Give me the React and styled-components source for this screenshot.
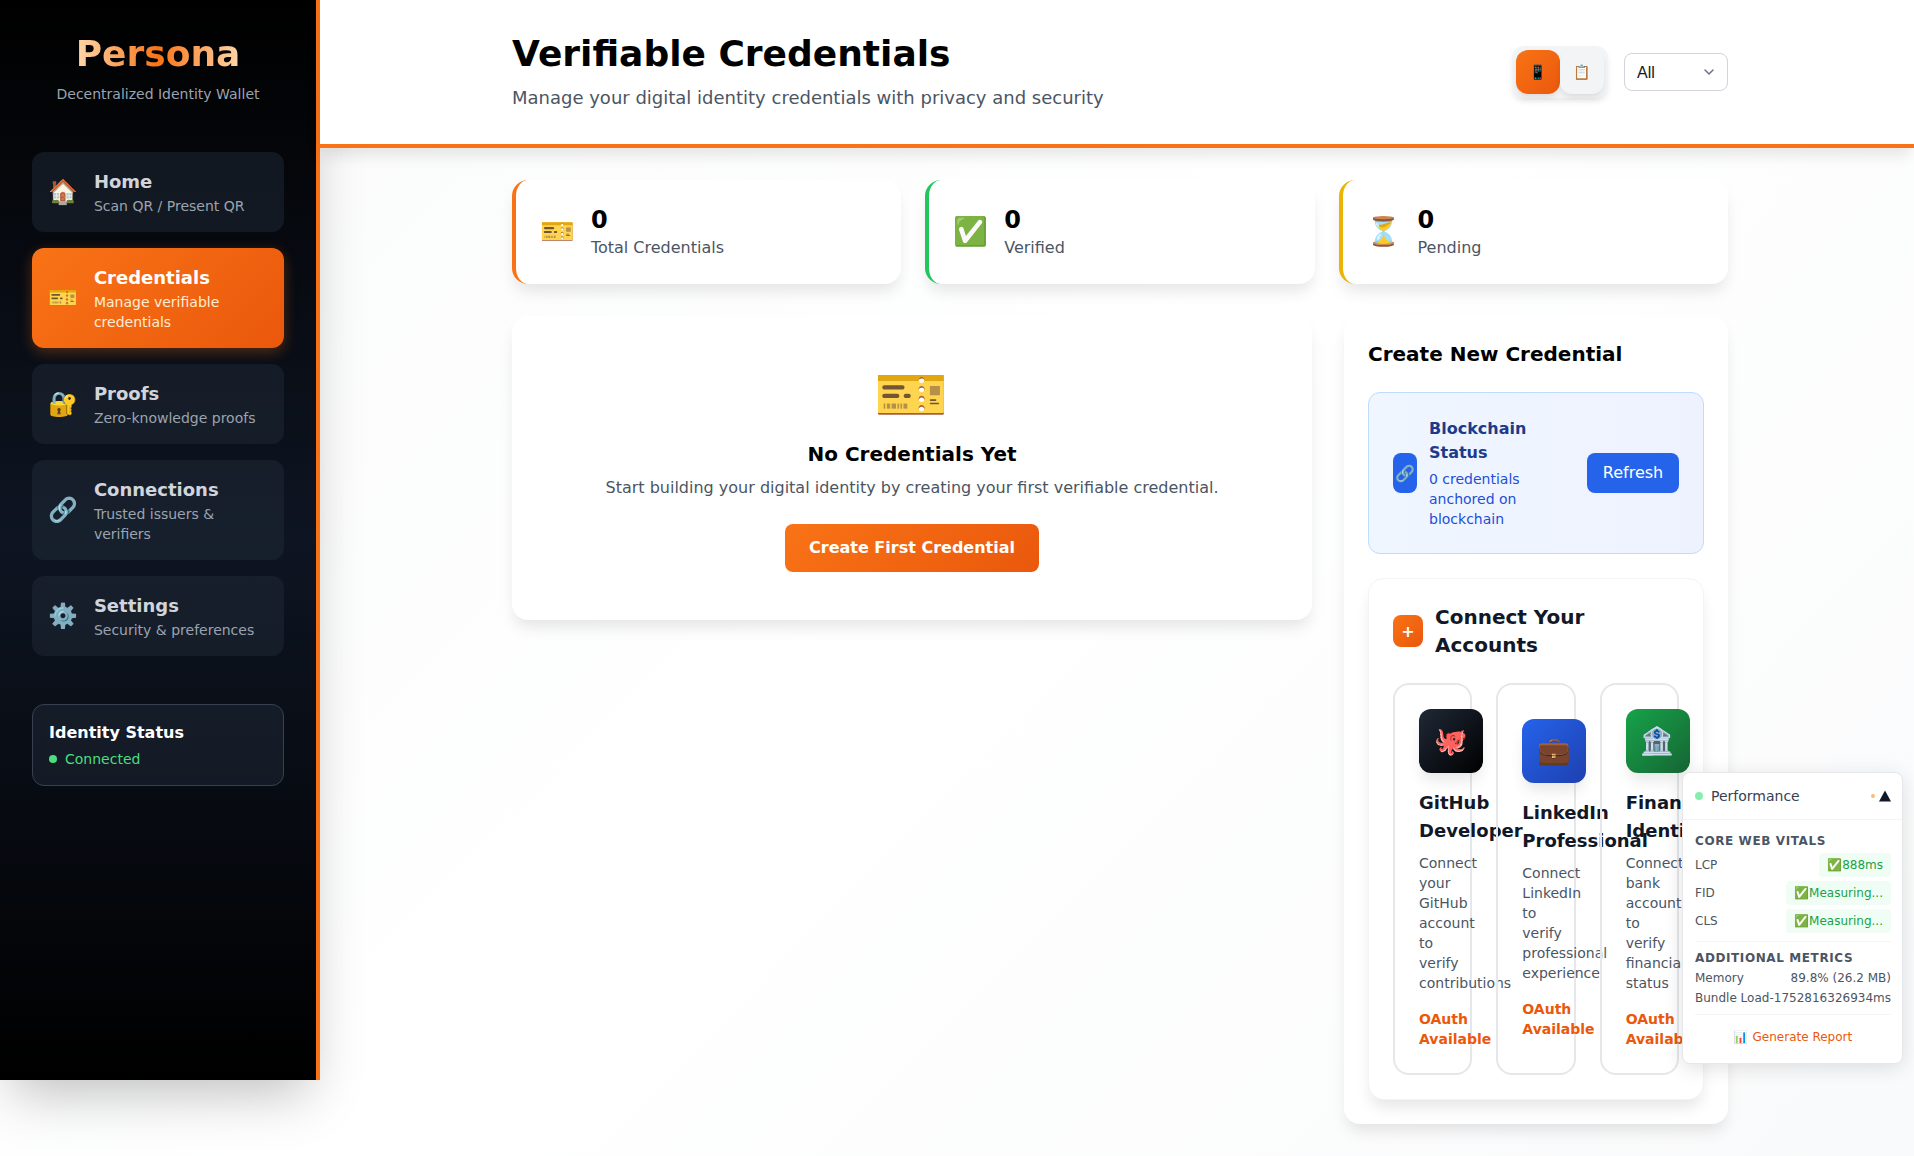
import React from "react";
import styled, { createGlobalStyle } from "styled-components";

const Global = createGlobalStyle`
  html, body { margin: 0; padding: 0; }
  body {
    font-family: "DejaVu Sans", "Noto Color Emoji", sans-serif;
    background: linear-gradient(135deg, #f9fafb 0%, #ffffff 50%, #f9fafb 100%);
    color: #000;
    min-height: 1156px;
    overflow-x: hidden;
  }
  * { box-sizing: border-box; }
`;

const Shell = styled.div`display: flex; align-items: flex-start; min-height: 1156px;`;

const Sidebar = styled.aside`
  flex: none;
  width: 320px;
  height: 1080px;
  padding: 32px 32px 0;
  border-right: 4px solid #f97316;
  background: linear-gradient(180deg, #000 0%, #0e1522 50%, #000 100%);
  box-shadow: 0 25px 50px -12px rgba(0, 0, 0, 0.25);
`;
const Brand = styled.div`text-align: center; margin-bottom: 48px;`;
const Logo = styled.h1`
  display: inline-block;
  margin: 0;
  font-size: 36px;
  line-height: 44px;
  font-weight: 700;
  background: linear-gradient(90deg, #fed7aa, #f97316 50%, #fed7aa);
  -webkit-background-clip: text;
  background-clip: text;
  color: transparent;
`;
const Tagline = styled.p`margin: 8px 0 0; font-size: 14px; line-height: 20px; color: #9ca3af;`;
const Nav = styled.nav`display: flex; flex-direction: column; gap: 16px;`;
const NavItem = styled.div`
  display: flex;
  align-items: center;
  gap: 16px;
  padding: 16px;
  border-radius: 12px;
  background: ${(p) => (p.$active ? "linear-gradient(135deg, #f97316, #ea580c)" : "rgba(31, 41, 55, 0.5)")};
  box-shadow: ${(p) => (p.$active ? "0 4px 14px rgba(249, 115, 22, 0.3)" : "none")};
`;
const NavIcon = styled.span`flex: none; font-size: 24px; line-height: 32px;`;
const NavText = styled.div`min-width: 0;`;
const NavTitle = styled.div`
  font-size: 18px;
  line-height: 28px;
  font-weight: 700;
  color: ${(p) => (p.$active ? "#fff" : "#d1d5db")};
`;
const NavSub = styled.div`
  font-size: 14px;
  line-height: 20px;
  color: ${(p) => (p.$active ? "#ffedd5" : "#9ca3af")};
`;
const StatusBox = styled.div`
  margin-top: 48px;
  padding: 16px;
  border: 1px solid #374151;
  border-radius: 12px;
  background: rgba(31, 41, 55, 0.5);
`;
const StatusTitle = styled.div`font-size: 16px; line-height: 24px; font-weight: 700; color: #fff;`;
const StatusLine = styled.div`
  display: flex;
  align-items: center;
  gap: 8px;
  margin-top: 4px;
  font-size: 14px;
  line-height: 20px;
  color: #4ade80;
`;
const StatusDot = styled.span`width: 8px; height: 8px; border-radius: 50%; background: #4ade80;`;

const Main = styled.main`flex: 1; min-width: 0;`;
const Header = styled.header`
  position: relative;
  display: flex;
  align-items: center;
  justify-content: space-between;
  height: 148px;
  padding: 0 186px 0 192px;
  background: #fff;
  border-bottom: 4px solid #f97316;
  box-shadow: 0 10px 15px -3px rgba(0, 0, 0, 0.1);
`;
const PageTitle = styled.h2`margin: 0; font-size: 36px; line-height: 44px; font-weight: 700; color: #000;`;
const PageSub = styled.p`margin: 8px 0 0; font-size: 18px; line-height: 28px; color: #4b5563;`;
const Controls = styled.div`display: flex; align-items: center; gap: 16px;`;
const Toggle = styled.div`
  display: flex;
  padding: 4px;
  border-radius: 12px;
  background: #f3f4f6;
  box-shadow: 0 4px 6px -1px rgba(0, 0, 0, 0.1);
`;
const ToggleBtn = styled.button`
  width: 44px;
  height: 44px;
  padding: 0;
  border: 0;
  border-radius: 12px;
  font-family: inherit;
  font-size: 14px;
  background: ${(p) => (p.$active ? "linear-gradient(135deg, #f97316, #ea580c)" : "#f3f4f6")};
  box-shadow: 0 4px 6px -1px rgba(0, 0, 0, 0.1);
`;
const FilterSelect = styled.select`
  appearance: none;
  width: 104px;
  height: 38px;
  padding: 0 12px;
  border: 1px solid #d1d5db;
  border-radius: 8px;
  font-family: "Liberation Sans", Arial, sans-serif;
  font-size: 16px;
  color: #111827;
  background: #fff url("data:image/svg+xml,%3Csvg xmlns='http://www.w3.org/2000/svg' fill='none' viewBox='0 0 20 20'%3E%3Cpath stroke='%236b7280' stroke-linecap='round' stroke-linejoin='round' stroke-width='1.5' d='M6 8l4 4 4-4'/%3E%3C/svg%3E") no-repeat right 8px center / 20px 20px;
`;

const Content = styled.div`padding: 32px 186px 32px 192px;`;
const Stats = styled.div`display: grid; grid-template-columns: repeat(3, 1fr); gap: 24px; margin-bottom: 32px;`;
const StatCard = styled.div`
  display: flex;
  align-items: center;
  gap: 16px;
  height: 104px;
  padding: 24px;
  background: #fff;
  border-left: 4px solid ${(p) => p.$color};
  border-radius: 16px;
  box-shadow: 0 10px 15px -3px rgba(0, 0, 0, 0.1);
`;
const StatIcon = styled.span`flex: none; font-size: 28px; line-height: 36px;`;
const StatValue = styled.div`font-size: 24px; line-height: 32px; font-weight: 700; color: #000;`;
const StatLabel = styled.div`font-size: 16px; line-height: 24px; color: #4b5563;`;

const Columns = styled.div`display: grid; grid-template-columns: 800px 384px; gap: 32px; align-items: start;`;
const EmptyCard = styled.section`
  padding: 48px;
  text-align: center;
  background: #fff;
  border-radius: 16px;
  box-shadow: 0 10px 15px -3px rgba(0, 0, 0, 0.1);
`;
const EmptyIcon = styled.div`font-size: 60px; line-height: 60px; margin-bottom: 16px;`;
const EmptyTitle = styled.h3`margin: 0 0 8px; font-size: 20px; line-height: 28px; font-weight: 700; color: #000;`;
const EmptyText = styled.p`margin: 0 0 24px; font-size: 16px; line-height: 24px; color: #4b5563;`;
const PrimaryBtn = styled.button`
  height: 48px;
  padding: 0 24px;
  border: 0;
  border-radius: 8px;
  font-family: inherit;
  font-size: 16px;
  line-height: 24px;
  font-weight: 700;
  color: #fff;
  background: linear-gradient(135deg, #f97316, #ea580c);
`;

const SideCard = styled.section`
  padding: 24px;
  background: #fff;
  border-radius: 16px;
  box-shadow: 0 10px 15px -3px rgba(0, 0, 0, 0.1);
`;
const SideTitle = styled.h3`margin: 0 0 24px; font-size: 20px; line-height: 28px; font-weight: 700; color: #000;`;
const ChainBox = styled.div`
  display: flex;
  align-items: center;
  justify-content: space-between;
  padding: 24px;
  margin-bottom: 24px;
  border: 1px solid #bfdbfe;
  border-radius: 12px;
  background: linear-gradient(90deg, #eff6ff, #eef2ff);
`;
const ChainLeft = styled.div`display: flex; align-items: center; gap: 12px; min-width: 0;`;
const ChainIcon = styled.div`
  flex: none;
  display: flex;
  align-items: center;
  justify-content: center;
  width: 24px;
  height: 40px;
  border-radius: 8px;
  font-size: 16px;
  background: #2563eb;
`;
const ChainTitle = styled.div`font-size: 16px; line-height: 24px; font-weight: 700; color: #1e3a8a;`;
const ChainSub = styled.div`margin-top: 4px; font-size: 14px; line-height: 20px; color: #1d4ed8;`;
const RefreshBtn = styled.button`
  flex: none;
  width: 92px;
  height: 40px;
  padding: 0;
  border: 0;
  border-radius: 8px;
  font-family: inherit;
  font-size: 16px;
  line-height: 24px;
  color: #fff;
  background: #2563eb;
`;
const ConnectCard = styled.div`
  padding: 24px;
  background: #fff;
  border: 1px solid #f3f4f6;
  border-radius: 16px;
  box-shadow: 0 10px 15px -3px rgba(0, 0, 0, 0.1);
`;
const ConnectHead = styled.div`display: flex; align-items: center; gap: 12px; margin-bottom: 24px;`;
const PlusIcon = styled.div`
  flex: none;
  display: flex;
  align-items: center;
  justify-content: center;
  width: 30px;
  height: 32px;
  border-radius: 8px;
  color: #fff;
  font-size: 16px;
  font-weight: 700;
  background: linear-gradient(135deg, #f97316, #ea580c);
`;
const ConnectTitle = styled.h4`margin: 0; font-size: 20px; line-height: 28px; font-weight: 700; color: #111827;`;
const AccountGrid = styled.div`display: grid; grid-template-columns: repeat(3, minmax(0, 1fr)); gap: 24px;`;
const AccountCard = styled.div`
  position: relative;
  z-index: 0;
  display: flex;
  flex-direction: column;
  justify-content: center;
  min-width: 0;
  padding: 24px;
  border: 2px solid #e5e7eb;
  border-radius: 16px;
`;
const AccountIcon = styled.div`
  display: flex;
  align-items: center;
  justify-content: center;
  flex: none;
  width: 64px;
  height: 64px;
  margin-bottom: 16px;
  border-radius: 12px;
  font-size: 27px;
  background: ${(p) => p.$bg};
  box-shadow: 0 10px 15px -3px rgba(0, 0, 0, 0.1);
`;
const AccountTitle = styled.div`font-size: 18px; line-height: 28px; font-weight: 700; color: #111827; margin-bottom: 8px;`;
const AccountText = styled.div`font-size: 14px; line-height: 20px; color: #4b5563; margin-bottom: 16px;`;
const AccountTag = styled.div`font-size: 14px; line-height: 20px; font-weight: 700; color: #ea580c;`;

const PerfPanel = styled.aside`
  position: absolute;
  top: 772px;
  right: 11px;
  z-index: 5;
  width: 221px;
  height: 292px;
  background: #fff;
  border: 1px solid #e5e7eb;
  border-radius: 8px;
  box-shadow: 0 4px 20px rgba(0, 0, 0, 0.12);
`;
const PerfHead = styled.div`
  display: flex;
  align-items: center;
  height: 47px;
  padding: 0 11px 0 12px;
  border-bottom: 1px solid #f3f4f6;
  font-size: 14px;
  color: #374151;
`;
const PerfDot = styled.span`width: 8px; height: 8px; border-radius: 50%; background: #86efac; margin-right: 8px;`;
const PerfName = styled.span`flex: 1;`;
const PerfMini = styled.span`width: 4px; height: 4px; border-radius: 50%; background: #fdba74; margin-right: 4px;`;
const PerfCaret = styled.svg`width: 12px; height: 12px; display: block;`;
const PerfBody = styled.div`padding: 13px 11px 0 12px;`;
const PerfSection = styled.div`font-size: 12px; line-height: 16px; font-weight: 700; letter-spacing: 0.05em; text-transform: uppercase; color: #4b5563; margin-bottom: ${(p) => p.$mb}px;`;
const VitalList = styled.div`display: flex; flex-direction: column; gap: 4px;`;
const VitalRow = styled.div`display: flex; align-items: center; justify-content: space-between; font-size: 12px; color: #4b5563;`;
const VitalPill = styled.span`height: 24px; padding: 0 8px; line-height: 24px; border-radius: 4px; color: #16a34a; background: #f0fdf4;`;
const PerfDivider = styled.div`height: 1px; background: #f3f4f6; margin: ${(p) => p.$m};`;
const MetricRow = styled.div`display: flex; justify-content: space-between; font-size: 12px; line-height: 20px; color: #4b5563;`;
const ReportLink = styled.div`margin-top: 14px; text-align: center; font-size: 12px; line-height: 16px; color: #ea580c;`;

const navItems = [
  { icon: "🏠", title: "Home", sub: "Scan QR / Present QR" },
  { icon: "🎫", title: "Credentials", sub: "Manage verifiable credentials", active: true },
  { icon: "🔐", title: "Proofs", sub: "Zero-knowledge proofs" },
  { icon: "🔗", title: "Connections", sub: "Trusted issuers & verifiers" },
  { icon: "⚙️", title: "Settings", sub: "Security & preferences" },
];
const stats = [
  { icon: "🎫", value: "0", label: "Total Credentials", color: "#f97316" },
  { icon: "✅", value: "0", label: "Verified", color: "#22c55e" },
  { icon: "⏳", value: "0", label: "Pending", color: "#eab308" },
];
const accounts = [
  { icon: "🐙", bg: "linear-gradient(135deg, #1f2937, #000)", title: "GitHub Developer", text: "Connect your GitHub account to verify contributions" },
  { icon: "💼", bg: "linear-gradient(135deg, #2563eb, #1e40af)", title: "LinkedIn Professional", text: "Connect LinkedIn to verify professional experience" },
  { icon: "🏦", bg: "linear-gradient(135deg, #16a34a, #166534)", title: "Financial Identity", text: "Connect bank account to verify financial status" },
];
const vitals = [["LCP", "✅888ms"], ["FID", "✅Measuring..."], ["CLS", "✅Measuring..."]];

export default function App() {
  return (
    <>
      <Global />
      <Shell>
        <Sidebar>
          <Brand>
            <Logo>Persona</Logo>
            <Tagline>Decentralized Identity Wallet</Tagline>
          </Brand>
          <Nav>
            {navItems.map((n) => (
              <NavItem key={n.title} $active={n.active}>
                <NavIcon>{n.icon}</NavIcon>
                <NavText>
                  <NavTitle $active={n.active}>{n.title}</NavTitle>
                  <NavSub $active={n.active}>{n.sub}</NavSub>
                </NavText>
              </NavItem>
            ))}
          </Nav>
          <StatusBox>
            <StatusTitle>Identity Status</StatusTitle>
            <StatusLine><StatusDot />Connected</StatusLine>
          </StatusBox>
        </Sidebar>
        <Main>
          <Header>
            <div>
              <PageTitle>Verifiable Credentials</PageTitle>
              <PageSub>Manage your digital identity credentials with privacy and security</PageSub>
            </div>
            <Controls>
              <Toggle>
                <ToggleBtn $active>📱</ToggleBtn>
                <ToggleBtn>📋</ToggleBtn>
              </Toggle>
              <FilterSelect defaultValue="All"><option>All</option></FilterSelect>
            </Controls>
          </Header>
          <Content>
            <Stats>
              {stats.map((s) => (
                <StatCard key={s.label} $color={s.color}>
                  <StatIcon>{s.icon}</StatIcon>
                  <div>
                    <StatValue>{s.value}</StatValue>
                    <StatLabel>{s.label}</StatLabel>
                  </div>
                </StatCard>
              ))}
            </Stats>
            <Columns>
              <EmptyCard>
                <EmptyIcon>🎫</EmptyIcon>
                <EmptyTitle>No Credentials Yet</EmptyTitle>
                <EmptyText>Start building your digital identity by creating your first verifiable credential.</EmptyText>
                <PrimaryBtn>Create First Credential</PrimaryBtn>
              </EmptyCard>
              <SideCard>
                <SideTitle>Create New Credential</SideTitle>
                <ChainBox>
                  <ChainLeft>
                    <ChainIcon>🔗</ChainIcon>
                    <div>
                      <ChainTitle>Blockchain Status</ChainTitle>
                      <ChainSub>0 credentials anchored on blockchain</ChainSub>
                    </div>
                  </ChainLeft>
                  <RefreshBtn>Refresh</RefreshBtn>
                </ChainBox>
                <ConnectCard>
                  <ConnectHead>
                    <PlusIcon>+</PlusIcon>
                    <ConnectTitle>Connect Your Accounts</ConnectTitle>
                  </ConnectHead>
                  <AccountGrid>
                    {accounts.map((a) => (
                      <AccountCard key={a.title}>
                        <AccountIcon $bg={a.bg}>{a.icon}</AccountIcon>
                        <AccountTitle>{a.title}</AccountTitle>
                        <AccountText>{a.text}</AccountText>
                        <AccountTag>OAuth Available</AccountTag>
                      </AccountCard>
                    ))}
                  </AccountGrid>
                </ConnectCard>
              </SideCard>
            </Columns>
          </Content>
        </Main>
      </Shell>
      <PerfPanel>
        <PerfHead>
          <PerfDot />
          <PerfName>Performance</PerfName>
          <PerfMini />
          <PerfCaret viewBox="0 0 12 12"><path d="M6 0.5 L12 11.5 L0 11.5 Z" fill="#111827" /></PerfCaret>
        </PerfHead>
        <PerfBody>
          <PerfSection $mb={4}>Core Web Vitals</PerfSection>
          <VitalList>
            {vitals.map(([k, v]) => (
              <VitalRow key={k}><span>{k}</span><VitalPill>{v}</VitalPill></VitalRow>
            ))}
          </VitalList>
          <PerfDivider $m="8px 0 8px" />
          <PerfSection $mb={2}>Additional Metrics</PerfSection>
          <MetricRow><span>Memory</span><span>89.8% (26.2 MB)</span></MetricRow>
          <MetricRow><span>Bundle Load</span><span>-1752816326934ms</span></MetricRow>
          <PerfDivider $m="6px 0 0" />
          <ReportLink>📊 Generate Report</ReportLink>
        </PerfBody>
      </PerfPanel>
    </>
  );
}
